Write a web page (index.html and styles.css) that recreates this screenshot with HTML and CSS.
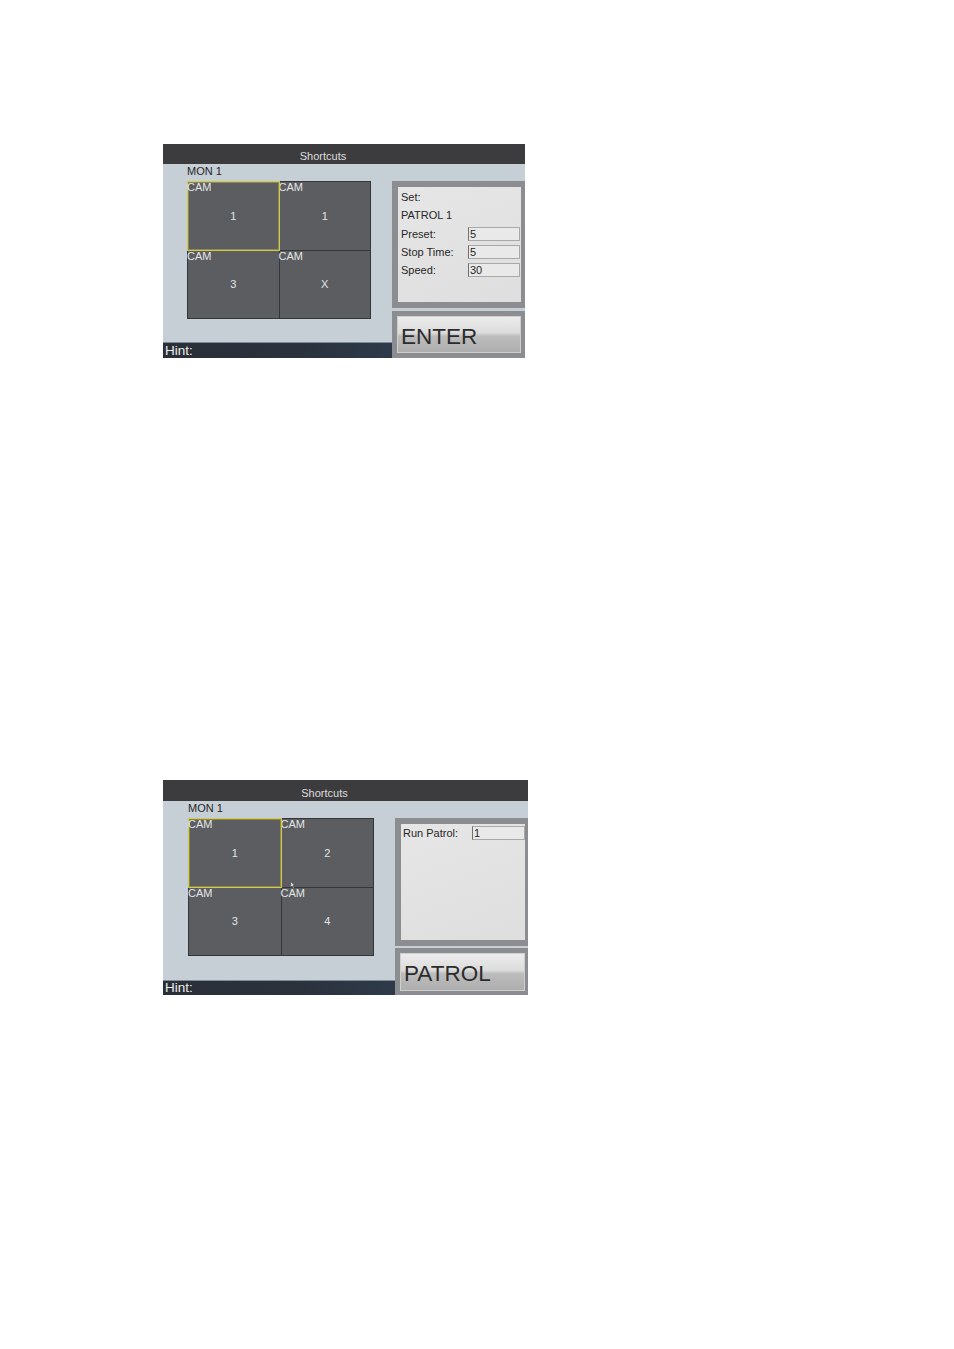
FILE: index.html
```html
<!DOCTYPE html>
<html>
<head>
<meta charset="utf-8">
<link rel="stylesheet" href="styles.css">
</head>
<body>
<div class="page">
  <div class="screen s1">
    <div class="titlebar"><span>Shortcuts</span></div>
    <div class="main">
      <div class="left">
        <div class="mon">MON 1</div>
        <div class="grid">
          <div class="cell sel"><span class="cam">CAM</span><span class="num">1</span></div>
          <div class="cell"><span class="cam">CAM</span><span class="num">1</span></div>
          <div class="cell"><span class="cam">CAM</span><span class="num">3</span></div>
          <div class="cell"><span class="cam">CAM</span><span class="num">X</span></div>
        </div>
        <div class="spacer"></div>
        <div class="hint">Hint:</div>
      </div>
      <div class="right">
        <div class="frame">
          <div class="panel">
            <div class="row">Set:</div>
            <div class="row">PATROL 1</div>
            <div class="row"><span class="lbl">Preset:</span><span class="inp">5</span></div>
            <div class="row"><span class="lbl">Stop Time:</span><span class="inp">5</span></div>
            <div class="row"><span class="lbl">Speed:</span><span class="inp">30</span></div>
          </div>
        </div>
        <div class="btnframe">
          <div class="btn">ENTER</div>
        </div>
      </div>
    </div>
  </div>

  <div class="screen s2">
    <div class="titlebar"><span>Shortcuts</span></div>
    <div class="main">
      <div class="left">
        <div class="mon">MON 1</div>
        <div class="grid">
          <div class="cell sel"><span class="cam">CAM</span><span class="num">1</span></div>
          <div class="cell"><span class="cam">CAM</span><span class="num">2</span></div>
          <div class="cell"><span class="cam">CAM</span><span class="num">3</span></div>
          <div class="cell"><span class="cam">CAM</span><span class="num">4</span></div>
          <svg class="cursor" width="6" height="8" viewBox="0 0 6 8"><path d="M0.5 0.5 L0.5 6.5 L2 5 L3.5 7.5 L4.3 7 L3 4.6 L5 4.6 Z" fill="#d8d8d8" stroke="#444" stroke-width="0.6"/></svg>
        </div>
        <div class="spacer"></div>
        <div class="hint">Hint:</div>
      </div>
      <div class="right">
        <div class="frame">
          <div class="panel">
            <div class="row"><span class="lbl">Run Patrol:</span><span class="inp">1</span></div>
          </div>
        </div>
        <div class="btnframe">
          <div class="btn">PATROL</div>
        </div>
      </div>
    </div>
  </div>
</div>
</body>
</html>
```

FILE: styles.css
```css
html, body {
  margin: 0;
  padding: 0;
  background: #ffffff;
}
body {
  font-family: "Liberation Sans", Arial, sans-serif;
}
.page {
  padding-left: 163px;
}
.screen {
  display: flex;
  flex-direction: column;
  background: #c6ced6;
  overflow: hidden;
}
.s1 {
  margin-top: 144px;
  width: 362px;
  height: 214px;
}
.s2 {
  margin-top: 422px;
  width: 365px;
  height: 215px;
}
.titlebar {
  background: #3c3c3f;
  color: #dcdcdc;
  font-size: 11px;
  text-align: center;
  padding-right: 42px;
  padding-top: 4px;
  box-sizing: border-box;
  display: flex;
  align-items: center;
  justify-content: center;
}
.s1 .titlebar { height: 20px; }
.s2 .titlebar { height: 21px; }
.main {
  flex: 1;
  display: flex;
  min-height: 0;
}
.left {
  display: flex;
  flex-direction: column;
}
.s1 .left { width: 229px; }
.s2 .left { width: 232px; }
.mon {
  height: 17px;
  line-height: 15px;
  font-size: 11px;
  color: #262626;
  padding-left: 24px;
}
.s2 .mon { padding-left: 25px; }
.grid {
  position: relative;
  display: grid;
  grid-template-columns: 1fr 1fr;
  grid-template-rows: 1fr 1fr;
  gap: 1px;
  background: #35363a;
  border: 1px solid #35363a;
  box-sizing: border-box;
  height: 138px;
}
.s1 .grid { margin-left: 24px; width: 184px; }
.s2 .grid { margin-left: 25px; width: 186px; }
.cell {
  display: grid;
  background: #5b5d61;
  color: #e4e4e4;
  font-size: 11px;
}
.cell.sel {
  position: relative;
  z-index: 1;
  margin: -1px;
  border: 1px solid #d2ca4a;
  box-shadow: inset 0 0 0 1px #8c8a52;
}
.cam, .num {
  grid-area: 1 / 1;
}
.cam {
  align-self: start;
  justify-self: start;
  line-height: 12px;
  margin-top: -1px;
  margin-left: -1px;
}
.num {
  align-self: center;
  justify-self: center;
}
.cursor {
  position: absolute;
  left: 101px;
  top: 62px;
  z-index: 2;
}
.spacer { flex: 1; }
.hint {
  background: linear-gradient(to right, #2a2f37 0%, #2b323c 60%, #2e3a4a 100%);
  border-top: 1px solid #7d8c9a;
  color: #ececec;
  font-size: 13.5px;
  line-height: 15px;
  padding-left: 2px;
  overflow: hidden;
}
.s1 .hint { height: 15px; }
.s2 .hint { height: 14px; line-height: 14px; }
.right {
  display: flex;
  flex-direction: column;
  padding-top: 17px;
  width: 133px;
}
.frame {
  background: #8b8d91;
  box-sizing: border-box;
  display: flex;
}
.s1 .frame { height: 127px; padding: 6px 4px 6px 6px; }
.s2 .frame { height: 128px; padding: 6px 3px 6px 6px; }
.panel {
  flex: 1;
  background: linear-gradient(160deg, #e6e6e6, #dedede);
  padding: 1px 0 0 3px;
  font-size: 11px;
  color: #262626;
}
.s2 .panel { padding: 0 0 0 2px; }
.row {
  height: 18.3px;
  display: flex;
  align-items: center;
}
.lbl {
  width: 67px;
}
.s2 .lbl { width: 69px; }
.inp {
  width: 49px;
  height: 12px;
  line-height: 12px;
  background: #e9e9e9;
  border: 1px solid #a9a9a9;
  border-left-color: #707070;
  padding-left: 1px;
  font-size: 11px;
}
.s2 .inp { width: 50px; }
.btnframe {
  background: #8b8d91;
  box-sizing: border-box;
  height: 47px;
  display: flex;
}
.s1 .btnframe { margin-top: 3px; padding: 5px 4px 5px 5px; }
.s2 .btnframe { margin-top: 2px; padding: 5px 3px 4px 5px; }
.btn {
  flex: 1;
  background: linear-gradient(to bottom, #ececec 0%, #dcdcdc 45%, #bcbcbc 55%, #aeaeae 100%);
  border: 1px solid #cfcfcf;
  color: #2c2c2c;
  font-size: 22.5px;
  line-height: 24px;
  padding: 8px 0 0 3px;
  overflow: hidden;
}
```
